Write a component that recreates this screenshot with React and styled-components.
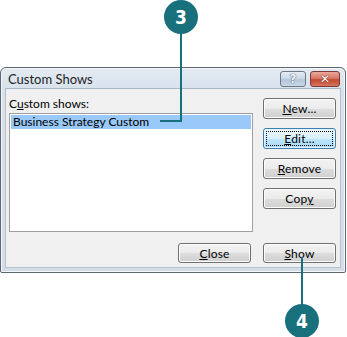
import React from "react";
import styled, { createGlobalStyle, css } from "styled-components";

const Global = createGlobalStyle`
  html, body { margin: 0; padding: 0; background: #ffffff; }
  body { font-family: Lato, "Open Sans", sans-serif; }
`;

const Page = styled.div`
  position: relative;
  width: 347px;
  height: 337px;
  background: #ffffff;
  overflow: hidden;
  padding-top: 67px;
  box-sizing: border-box;
`;

const Window = styled.div`
  width: 346px;
  height: 206px;
  box-sizing: border-box;
  border: 1px solid #5d6670;
  border-radius: 6px 6px 2px 2px;
  background: linear-gradient(#e3eaf2, #d8e2ec 22px, #d4dee9);
  box-shadow: inset 0 0 0 1px #f4f8fb;
  padding: 0 4px 4px 4px;
  display: flex;
  flex-direction: column;
`;

const TitleBar = styled.div`
  height: 20px;
  display: flex;
  align-items: flex-start;
  padding-left: 3px;
  gap: 4px;
`;

const Title = styled.div`
  flex: 1;
  font-family: Lato, "Open Sans", sans-serif;
  font-size: 13px;
  line-height: 20px;
  color: #1e1e1e;
  padding-top: 1px;
`;

const CaptionBtn = styled.div`
  height: 16px;
  box-sizing: border-box;
  border: 1px solid #6b7785;
  border-radius: 3px;
  display: flex;
  align-items: center;
  justify-content: center;
  font-family: "DejaVu Sans", sans-serif;
  font-weight: bold;
  color: #ffffff;
  margin-top: 3px;
  ${(p) =>
    p.$close
      ? css`
          width: 30px;
          margin-right: 1px;
          font-size: 12px;
          border-color: #7a3a35;
          background: linear-gradient(#eaa89a, #d8786a 45%, #c4492f 55%, #d6765f);
          text-shadow: 0 0 1px #6b1f15, 0 0 1px #6b1f15;
        `
      : css`
          width: 26px;
          font-size: 12px;
          background: linear-gradient(#e6edf5, #ccd9e6 45%, #b4c6d8 55%, #c8d8e8);
          color: #f4f8fc;
          text-shadow: 0 0 1px #3b4f66, 0 0 1px #3b4f66;
        `}
`;

const Client = styled.div`
  flex: 1;
  background: #f0f0f0;
  border: 1px solid #b4c0cc;
  border-top-color: #a9b6c3;
  padding: 7px 4px 4px 3px;
  display: flex;
  flex-direction: column;
  font-family: Lato, "Open Sans", sans-serif;
  font-size: 12px;
  color: #000;
`;

const Body = styled.div`
  display: flex;
  gap: 10px;
`;

const LeftCol = styled.div`
  display: flex;
  flex-direction: column;
  gap: 1px;
`;

const Label = styled.div`
  line-height: 16px;
  height: 16px;
`;

const ListBox = styled.div`
  width: 244px;
  height: 119px;
  box-sizing: border-box;
  border: 1px solid #a0a0a0;
  background: #ffffff;
  padding: 1px;
`;

const ListItem = styled.div`
  height: 14px;
  line-height: 14px;
  padding-left: 2px;
  background: ${(p) => (p.$selected ? "#99c9f9" : "transparent")};
  color: #000;
`;

const RightCol = styled.div`
  display: flex;
  flex-direction: column;
  gap: 9px;
  padding-top: 2px;
`;

const Button = styled.div`
  position: relative;
  width: 73px;
  height: 21px;
  box-sizing: border-box;
  border: 1px solid #707070;
  border-radius: 3px;
  display: flex;
  align-items: center;
  justify-content: center;
  font-size: 12px;
  letter-spacing: 0.2px;
  color: #000;
  background: linear-gradient(#f3f3f3, #ebebeb 50%, #dddddd 51%, #cfcfcf);
  box-shadow: inset 0 0 0 1px #fcfcfc;
  ${(p) =>
    p.$focused &&
    css`
      border-color: #3c7fb1;
      background: linear-gradient(#eaf6fd, #d9f0fc 50%, #bee6fd 51%, #a7d9f5);
      box-shadow: inset 0 0 0 1px #e8f4fb;
      &::after {
        content: "";
        position: absolute;
        inset: 2px;
        border: 1px dotted #000;
        border-radius: 1px;
      }
    `}
  ${(p) =>
    p.$short &&
    css`
      height: 20px;
    `}
`;

const U = styled.span`
  text-decoration: underline;
  text-underline-offset: 1px;
`;

const Footer = styled.div`
  margin-top: 11px;
  display: flex;
  justify-content: flex-end;
  gap: 12px;
`;

const Callout = styled.div`
  position: absolute;
  width: 34px;
  height: 34px;
  border-radius: 50%;
  background: #17707c;
  color: #ffffff;
  display: flex;
  align-items: center;
  justify-content: center;
  font-family: "DejaVu Sans Condensed", "DejaVu Sans", sans-serif;
  font-weight: bold;
  font-size: 19px;
  left: ${(p) => p.$x}px;
  top: ${(p) => p.$y}px;
  z-index: 2;
`;

const Leader = styled.div`
  position: absolute;
  background: #17707c;
  left: ${(p) => p.$x}px;
  top: ${(p) => p.$y}px;
  width: ${(p) => p.$w}px;
  height: ${(p) => p.$h}px;
  z-index: 2;
`;

export default function App() {
  return (
    <>
      <Global />
      <Page>
        <Window>
          <TitleBar>
            <Title>Custom Shows</Title>
            <CaptionBtn>?</CaptionBtn>
            <CaptionBtn $close>✕</CaptionBtn>
          </TitleBar>
          <Client>
            <Body>
              <LeftCol>
                <Label>
                  C<U>u</U>stom shows:
                </Label>
                <ListBox>
                  <ListItem $selected>Business Strategy Custom</ListItem>
                </ListBox>
              </LeftCol>
              <RightCol>
                <Button>
                  <span>
                    <U>N</U>ew...
                  </span>
                </Button>
                <Button $focused>
                  <span>
                    <U>E</U>dit...
                  </span>
                </Button>
                <Button>
                  <span>
                    <U>R</U>emove
                  </span>
                </Button>
                <Button>
                  <span>
                    Cop<U>y</U>
                  </span>
                </Button>
              </RightCol>
            </Body>
            <Footer>
              <Button $short>
                <span>
                  <U>C</U>lose
                </span>
              </Button>
              <Button $short>
                <span>
                  <U>S</U>how
                </span>
              </Button>
            </Footer>
          </Client>
        </Window>

        <Callout $x={164} $y={0}>3</Callout>
        <Leader $x={180} $y={30} $w={2} $h={92} />
        <Leader $x={160} $y={120} $w={22} $h={2} />

        <Callout $x={285} $y={304}>4</Callout>
        <Leader $x={301} $y={257} $w={2} $h={50} />
      </Page>
    </>
  );
}
